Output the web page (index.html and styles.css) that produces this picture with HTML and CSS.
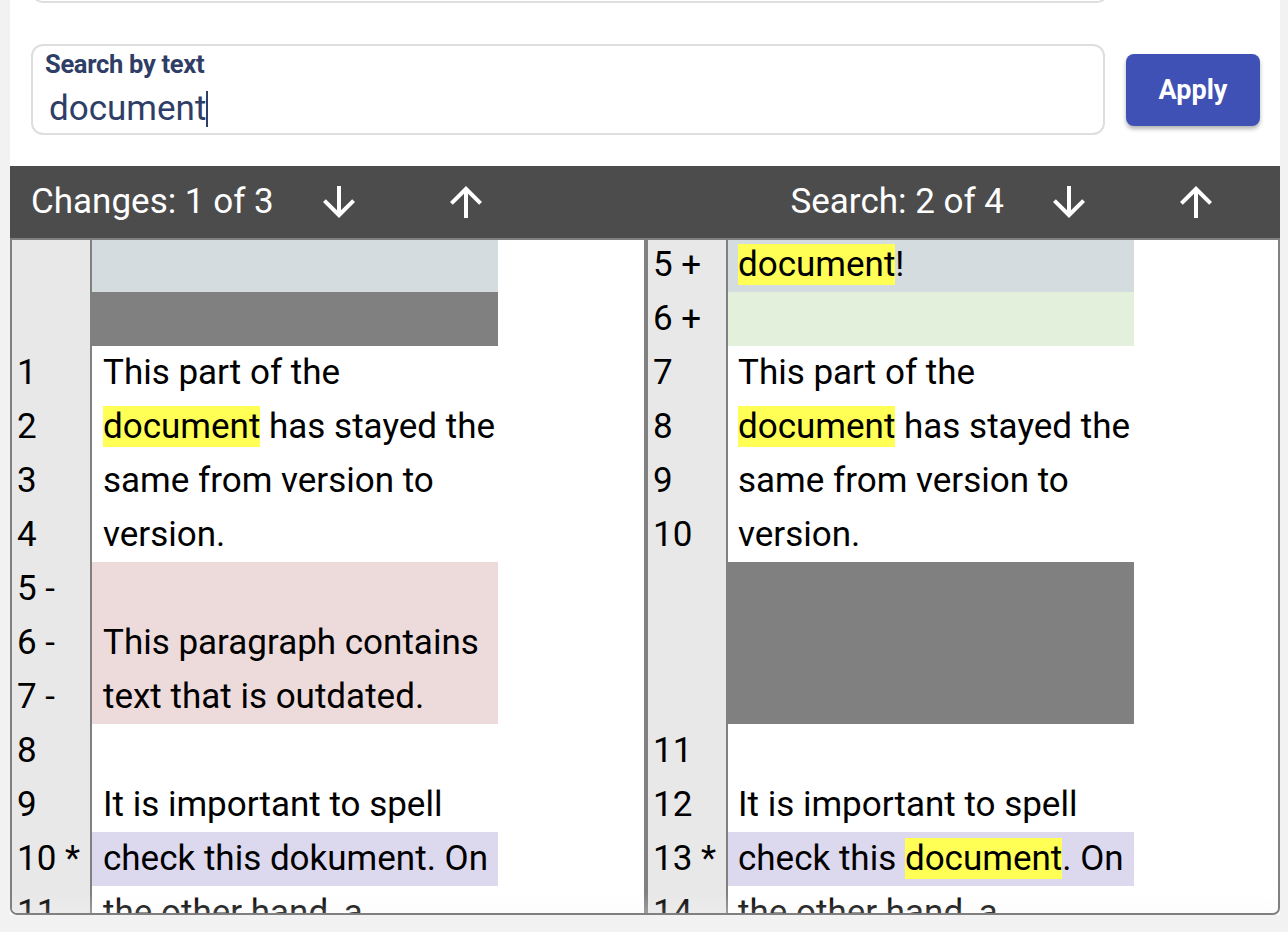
FILE: index.html
```html
<!DOCTYPE html>
<html lang="en">
<head>
<meta charset="utf-8">
<title>Diff viewer</title>
<link rel="stylesheet" href="styles.css">
</head>
<body>
<div class="card">
  <div class="filter-row filter-row--prev">
    <div class="field"></div>
    <div class="ghost-btn"></div>
  </div>
  <div class="filter-row filter-row--search">
    <div class="field">
      <div class="field-label">Search by text</div>
      <div class="field-value">document<span class="caret"></span></div>
    </div>
    <button class="apply-btn">Apply</button>
  </div>

  <div class="nav-bar">
    <div class="nav-group">
      <span class="nav-text">Changes: 1 of 3</span>
      <svg class="nav-icon nav-icon--down" viewBox="0 0 24 24"><path d="M20 12l-1.41-1.41L13 16.17V4h-2v12.17l-5.58-5.59L4 12l8 8 8-8z"/></svg>
      <svg class="nav-icon nav-icon--up" viewBox="0 0 24 24"><path d="M4 12l1.41 1.41L11 7.83V20h2V7.83l5.58 5.59L20 12l-8-8-8 8z"/></svg>
    </div>
    <div class="nav-group">
      <span class="nav-text">Search: 2 of 4</span>
      <svg class="nav-icon nav-icon--down" viewBox="0 0 24 24"><path d="M20 12l-1.41-1.41L13 16.17V4h-2v12.17l-5.58-5.59L4 12l8 8 8-8z"/></svg>
      <svg class="nav-icon nav-icon--up" viewBox="0 0 24 24"><path d="M4 12l1.41 1.41L11 7.83V20h2V7.83l5.58 5.59L20 12l-8-8-8 8z"/></svg>
    </div>
  </div>

  <div class="diff">
    <div class="diff-inner">
      <div class="pane pane--left">
        <div class="row"><div class="ln"></div><div class="txt mod"></div></div>
        <div class="row"><div class="ln"></div><div class="txt gap"></div></div>
        <div class="row"><div class="ln">1</div><div class="txt">This part of the</div></div>
        <div class="row"><div class="ln">2</div><div class="txt"><span class="hit">document</span> has stayed the</div></div>
        <div class="row"><div class="ln">3</div><div class="txt">same from version to</div></div>
        <div class="row"><div class="ln">4</div><div class="txt">version.</div></div>
        <div class="row"><div class="ln">5 -</div><div class="txt del"></div></div>
        <div class="row"><div class="ln">6 -</div><div class="txt del">This paragraph contains</div></div>
        <div class="row"><div class="ln">7 -</div><div class="txt del">text that is outdated.</div></div>
        <div class="row"><div class="ln">8</div><div class="txt"></div></div>
        <div class="row"><div class="ln">9</div><div class="txt">It is important to spell</div></div>
        <div class="row"><div class="ln">10 *</div><div class="txt chg">check this dokument. On</div></div>
        <div class="row"><div class="ln">11</div><div class="txt">the other hand, a</div></div>
      </div>
      <div class="pane pane--right">
        <div class="row"><div class="ln">5 +</div><div class="txt mod"><span class="hit">document</span>!</div></div>
        <div class="row"><div class="ln">6 +</div><div class="txt add"></div></div>
        <div class="row"><div class="ln">7</div><div class="txt">This part of the</div></div>
        <div class="row"><div class="ln">8</div><div class="txt"><span class="hit">document</span> has stayed the</div></div>
        <div class="row"><div class="ln">9</div><div class="txt">same from version to</div></div>
        <div class="row"><div class="ln">10</div><div class="txt">version.</div></div>
        <div class="row"><div class="ln"></div><div class="txt gap"></div></div>
        <div class="row"><div class="ln"></div><div class="txt gap"></div></div>
        <div class="row"><div class="ln"></div><div class="txt gap"></div></div>
        <div class="row"><div class="ln">11</div><div class="txt"></div></div>
        <div class="row"><div class="ln">12</div><div class="txt">It is important to spell</div></div>
        <div class="row"><div class="ln">13 *</div><div class="txt chg">check this <span class="hit">document</span>. On</div></div>
        <div class="row"><div class="ln">14</div><div class="txt">the other hand, a</div></div>
      </div>
    </div>
    <div class="diff-fade"></div>
  </div>
</div>
</body>
</html>
```
FILE: styles.css
```css
* { box-sizing: border-box; }

html, body {
  margin: 0;
  padding: 0;
  background: #f2f2f2;
  font-family: Roboto, "Liberation Sans", Arial, sans-serif;
  overflow: hidden;
}

.card {
  width: 1270px;
  margin-left: 10px;
  background: #ffffff;
}

.filter-row {
  display: flex;
  align-items: center;
  gap: 21px;
  padding: 0 20px 0 21px;
}

.filter-row--prev {
  margin-top: -88px;
}

.filter-row--search {
  margin-top: 41px;
  margin-bottom: 31px;
}

.field {
  flex: 1;
  height: 91px;
  border: 2px solid #dedede;
  border-radius: 12px;
  padding: 5px 12px 0 12px;
  color: #2f3e66;
}

.ghost-btn {
  width: 130px;
  height: 72px;
  border-radius: 8px;
  background: #ffffff;
  box-shadow: 0 1px 3px rgba(0, 0, 0, 0.22);
  transform: translateY(-8px);
}

.field-label {
  font-size: 25.5px;
  font-weight: 700;
  line-height: 26px;
  letter-spacing: -0.3px;
}

.field-value {
  font-size: 35px;
  line-height: 40px;
  margin-top: 12px;
  padding-left: 4px;
}

.caret {
  display: inline-block;
  width: 2px;
  height: 36px;
  background: #2f3e66;
  vertical-align: -7px;
}

.apply-btn {
  width: 134px;
  height: 72px;
  border: none;
  border-radius: 8px;
  background: #3f51b5;
  color: #ffffff;
  font-family: Roboto, "Liberation Sans", Arial, sans-serif;
  font-size: 27px;
  font-weight: 700;
  box-shadow: 0 3px 4px rgba(0, 0, 0, 0.3);
  padding: 0;
}

.nav-bar {
  height: 72px;
  background: #4c4c4c;
  color: #ffffff;
  display: flex;
  align-items: center;
  justify-content: space-between;
  padding: 0 60px 0 21px;
}

.nav-group {
  display: flex;
  align-items: center;
}

.nav-text {
  font-size: 35px;
  line-height: 72px;
}

.nav-icon {
  width: 48px;
  height: 48px;
  fill: #ffffff;
}

.nav-icon--down {
  margin-left: 41px;
}

.nav-icon--up {
  margin-left: 79px;
}

.diff {
  position: relative;
  height: 677px;
  border: 2px solid #808080;
  border-radius: 0 0 7px 7px;
  overflow: hidden;
  background: #ffffff;
}

.diff-inner {
  display: flex;
  margin-top: -2px;
}

.diff-fade {
  position: absolute;
  left: 0;
  right: 0;
  bottom: 0;
  height: 20px;
  background: linear-gradient(rgba(245, 245, 245, 0), rgba(245, 245, 245, 0.25));
  pointer-events: none;
}

.pane {
  display: flex;
  flex-direction: column;
}

.pane--left {
  width: 632px;
}

.pane--right {
  width: 634px;
  border-left: 4px solid #808080;
}

.row {
  display: flex;
  height: 54px;
  font-size: 35px;
  line-height: 54px;
  color: #000000;
  white-space: nowrap;
}

.ln {
  width: 80px;
  flex: none;
  background: #e8e8e8;
  border-right: 2px solid #808080;
  padding-left: 5px;
}

.txt {
  width: 406px;
  flex: none;
  padding-left: 11px;
}

.pane--right .txt {
  padding-left: 10px;
}

.mod { background: #d4dce0; }
.gap { background: #808080; }
.del { background: #eddbdb; }
.add { background: #e3f0dc; }
.chg { background: #dcd8ee; }

.hit { background: #ffff55; }
```
